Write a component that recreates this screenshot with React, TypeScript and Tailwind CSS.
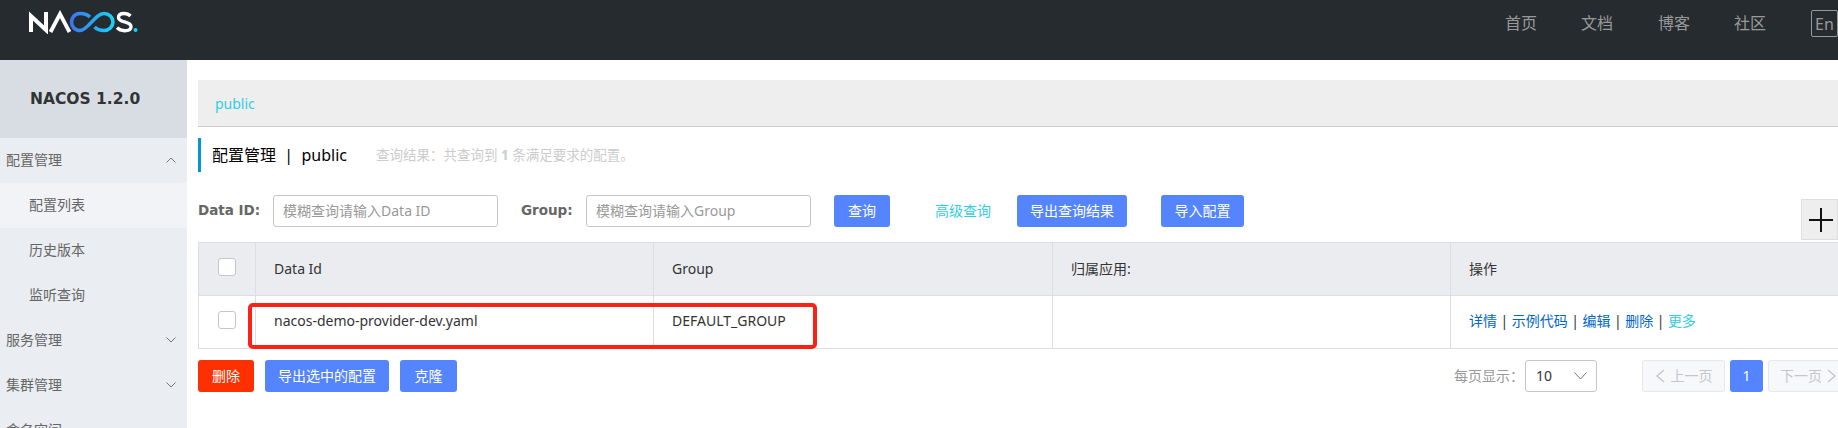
const sans = "font-['Noto_Sans','Noto_Sans_CJK_SC',sans-serif]";

const sideItems = ['历史版本', '监听查询'];
const links = ['详情', '示例代码', '编辑', '删除'];

function Chevron({ up = false }: { up?: boolean }) {
  return (
    <svg width="10" height="6" viewBox="0 0 10 6" fill="none" stroke="#777" strokeWidth="1" className="ml-auto mr-[11px]">
      <path d={up ? 'M0.5 5.5 5 1l4.500 4.500' : 'M0.5 0.5 5 5l4.500-4.500'} />
    </svg>
  );
}

function Logo() {
  return (
    <svg width="110" height="24" viewBox="0 0 110 24" fill="none" className="ml-[28px] mt-[10px]">
      <defs>
        <linearGradient id="inf" x1="0" x2="1" y1="0" y2="0">
          <stop offset="0" stopColor="#3b78f0" />
          <stop offset="1" stopColor="#1bd0f5" />
        </linearGradient>
      </defs>
      <path d="M3 22V6L18 20V2" stroke="#fff" strokeWidth="4" />
      <path d="M22.500 22 32 4 41.500 22" stroke="#fff" strokeWidth="3.800" />
      <path
        d="M62 7C59 4 56 3.500 52 3.500 47 3.500 43.500 7.500 43.500 12S47 20.500 52 20.500C60 20.500 67 3.500 76 3.500 81 3.500 85 7.500 85 12S81 20.500 76 20.500C72 20.500 69 19.500 66.500 17"
        stroke="url(#inf)"
        strokeWidth="3.600"
      />
      <path d="M102.500 6C100.500 4 98.500 3.500 96 3.500c-3 0-5.500 1.300-5.500 4 0 5.800 12.500 3 12.500 9.200 0 3-2.800 4-6.500 4-3 0-5.500-.9-7.500-3" stroke="#fff" strokeWidth="3.400" />
      <circle cx="107.500" cy="20" r="2" fill="#1bd0f5" />
    </svg>
  );
}

function PrimaryButton({ children, className = '' }: { children: React.ReactNode; className?: string }) {
  return (
    <button className={`h-8 rounded-[3px] bg-[#5584ff] text-sm text-white ${className}`}>{children}</button>
  );
}

function Sidebar() {
  return (
    <aside className="h-[368px] w-[187px] shrink-0 overflow-hidden bg-[#eaedf1] text-sm text-[#666]">
      <div className="flex h-[78px] items-center bg-[#d8dde4] pl-[30px] font-['DejaVu_Sans',sans-serif] text-[15.5px] font-bold text-[#333]">
        NACOS 1.2.0
      </div>
      <div className="flex h-[45px] items-center pb-[2px] pl-[6px]">
        配置管理
        <Chevron up />
      </div>
      <div className="bg-[#f2f3f7]">
        <div className="flex h-[45px] items-center pb-[2px] pl-[29px]">配置列表</div>
      </div>
      {sideItems.map((item) => (
        <div key={item} className="flex h-[45px] items-center pb-[2px] pl-[29px]">
          {item}
        </div>
      ))}
      <div className="flex h-[45px] items-center pb-[2px] pl-[6px]">
        服务管理
        <Chevron />
      </div>
      <div className="flex h-[45px] items-center pb-[2px] pl-[6px]">
        集群管理
        <Chevron />
      </div>
      <div className="flex h-[45px] items-center pb-[2px] pl-[6px]">命名空间</div>
    </aside>
  );
}

function Checkbox() {
  return <span className="mb-1 block h-[18px] w-[18px] rounded-[3px] border border-[#c4c6cf] bg-white" />;
}

function SearchRow() {
  return (
    <div className="mt-[23px] flex h-8 items-center text-sm">
      <span className="w-[75px] font-['DejaVu_Sans',sans-serif] text-[13.5px] font-bold text-[#666]">Data ID:</span>
      <div className="flex h-8 w-[225px] items-center rounded-[3px] border border-[#c4c6cf] pl-[9px] text-[#999]">
        模糊查询请输入Data ID
      </div>
      <span className="ml-[23px] w-[65px] font-['DejaVu_Sans',sans-serif] text-[13.5px] font-bold text-[#666]">Group:</span>
      <div className="flex h-8 w-[225px] items-center rounded-[3px] border border-[#c4c6cf] pl-[9px] text-[#999]">
        模糊查询请输入Group
      </div>
      <PrimaryButton className="ml-[23px] w-[56px]">查询</PrimaryButton>
      <span className="ml-[45px] text-sm text-[#33cde5]">高级查询</span>
      <PrimaryButton className="ml-[26px] w-[110px]">导出查询结果</PrimaryButton>
      <PrimaryButton className="ml-[34px] w-[83px]">导入配置</PrimaryButton>
    </div>
  );
}

function ConfigTable() {
  return (
    <div className="relative mt-[15px] mr-[-1px] border border-[#dcdee3] text-sm text-[#333]">
      <div className="flex h-[53px] items-center border-b border-[#dcdee3] bg-[#ebecf0]">
        <div className="flex h-full w-[57px] items-center justify-center border-r border-[#dcdee3]">
          <Checkbox />
        </div>
        <div className="flex h-full w-[398px] items-center border-r border-[#dcdee3] pl-[18px]">Data Id</div>
        <div className="flex h-full w-[399px] items-center border-r border-[#dcdee3] pl-[18px]">Group</div>
        <div className="flex h-full w-[398px] items-center border-r border-[#dcdee3] pl-[18px]">归属应用:</div>
        <div className="flex h-full flex-1 items-center pl-[18px]">操作</div>
      </div>
      <div className="flex h-[52px] items-center">
        <div className="flex h-full w-[57px] items-center justify-center border-r border-[#dcdee3]">
          <Checkbox />
        </div>
        <div className="flex h-full w-[398px] items-center border-r border-[#dcdee3] pb-[2px] pl-[18px]">
          nacos-demo-provider-dev.yaml
        </div>
        <div className="flex h-full w-[399px] items-center border-r border-[#dcdee3] pb-[2px] pl-[18px]">DEFAULT_GROUP</div>
        <div className="h-full w-[398px] border-r border-[#dcdee3]" />
        <div className="flex h-full flex-1 items-center pb-[2px] pl-[18px]">
          {links.map((link) => (
            <span key={link} className="flex items-center">
              <span className="text-[#0066cc]">{link}</span>
              <span className="mx-[3.5px] text-[#333]">|</span>
            </span>
          ))}
          <span className="text-[#33cde5]">更多</span>
        </div>
      </div>
      {/* annotation drawn on top of the screenshot */}
      <div className="absolute left-[49px] top-[60px] h-[46px] w-[569px] rounded-[5px] border-[4px] border-[#fb2115]" />
    </div>
  );
}

function Footer() {
  return (
    <div className="mt-[11px] flex h-8 items-center text-sm">
      <button className="h-8 w-[56px] rounded-[3px] bg-[#ff3000] text-white">删除</button>
      <PrimaryButton className="ml-[11px] w-[124px]">导出选中的配置</PrimaryButton>
      <PrimaryButton className="ml-[11px] w-[57px]">克隆</PrimaryButton>
      <span className="ml-auto text-[#999]">每页显示：</span>
      <div className="ml-[1px] flex h-8 w-[72px] items-center rounded-[3px] border border-[#c4c6cf] pl-[10px] text-sm text-[#333]">
        10
        <svg width="13" height="8" viewBox="0 0 13 8" fill="none" stroke="#777" className="ml-auto mr-[9px]">
          <path d="M0.500 0.500 6.500 7l6-6.500" />
        </svg>
      </div>
      <div className="ml-[45px] flex h-8 w-[83px] items-center justify-center gap-[6px] rounded-[3px] border border-[#e6e7eb] bg-[#f7f8fa] text-[#c4c6cf]">
        <svg width="10" height="14" viewBox="0 0 10 14" fill="none" stroke="#c4c6cf" strokeWidth="1.400">
          <path d="M9 1 2 7l7 6" />
        </svg>
        上一页
      </div>
      <button className="ml-[5px] h-8 w-[33px] rounded-[3px] bg-[#5584ff] text-white">1</button>
      <div className="ml-[5px] flex h-8 w-[70px] shrink-0 items-center gap-[5px] overflow-hidden rounded-l-[3px] border border-r-0 border-[#e6e7eb] bg-[#f7f8fa] pl-[11px] text-[#c4c6cf]">
        <span className="shrink-0">下一页</span>
        <svg width="10" height="14" viewBox="0 0 10 14" fill="none" stroke="#c4c6cf" strokeWidth="1.400" className="shrink-0">
          <path d="M1 1l7 6-7 6" />
        </svg>
      </div>
    </div>
  );
}

export default function App() {
  return (
    <div className={`relative h-[428px] w-[1838px] overflow-hidden bg-white ${sans}`}>
      <header className="flex h-[60px] bg-[#262b30]">
        <Logo />
        <nav className="ml-auto flex h-full items-start pt-[11px] text-base text-[#999]">
          <span className="w-[76px]">首页</span>
          <span className="w-[77px]">文档</span>
          <span className="w-[76px]">博客</span>
          <span className="w-[77px]">社区</span>
          <span className="mt-[-1px] flex h-[27px] w-[27px] items-center justify-center rounded-[2px] border border-[#999]">
            En
          </span>
        </nav>
      </header>
      <div className="flex">
        <Sidebar />
        <main className="min-w-0 flex-1 pl-[11px] pt-[20px]">
          <div className="flex h-[47px] items-center border-b border-[#ccc] bg-[#eee] pl-[17px] pt-[2px] text-sm text-[#33cde5]">
            public
          </div>
          <div className="mt-[11px] flex h-[34px] items-center border-l-[3px] border-[#09c] pl-[11px]">
            <span className="text-base text-black">配置管理&nbsp;&nbsp;|&nbsp;&nbsp;public</span>
            <span className="ml-[29px] text-[13.5px] text-[#ccc]">
              查询结果：共查询到 <b>1</b> 条满足要求的配置。
            </span>
          </div>
          <SearchRow />
          <ConfigTable />
          <Footer />
        </main>
      </div>
      {/* floating add tab on the right edge */}
      <div className="absolute right-0 top-[199px] flex h-[41px] w-[37px] items-center border border-[#ddd] bg-[#eee] pl-[7px]">
        <svg width="24" height="24" viewBox="0 0 24 24" stroke="#111" strokeWidth="2">
          <path d="M12 0v24M0 12h24" />
        </svg>
      </div>
    </div>
  );
}
